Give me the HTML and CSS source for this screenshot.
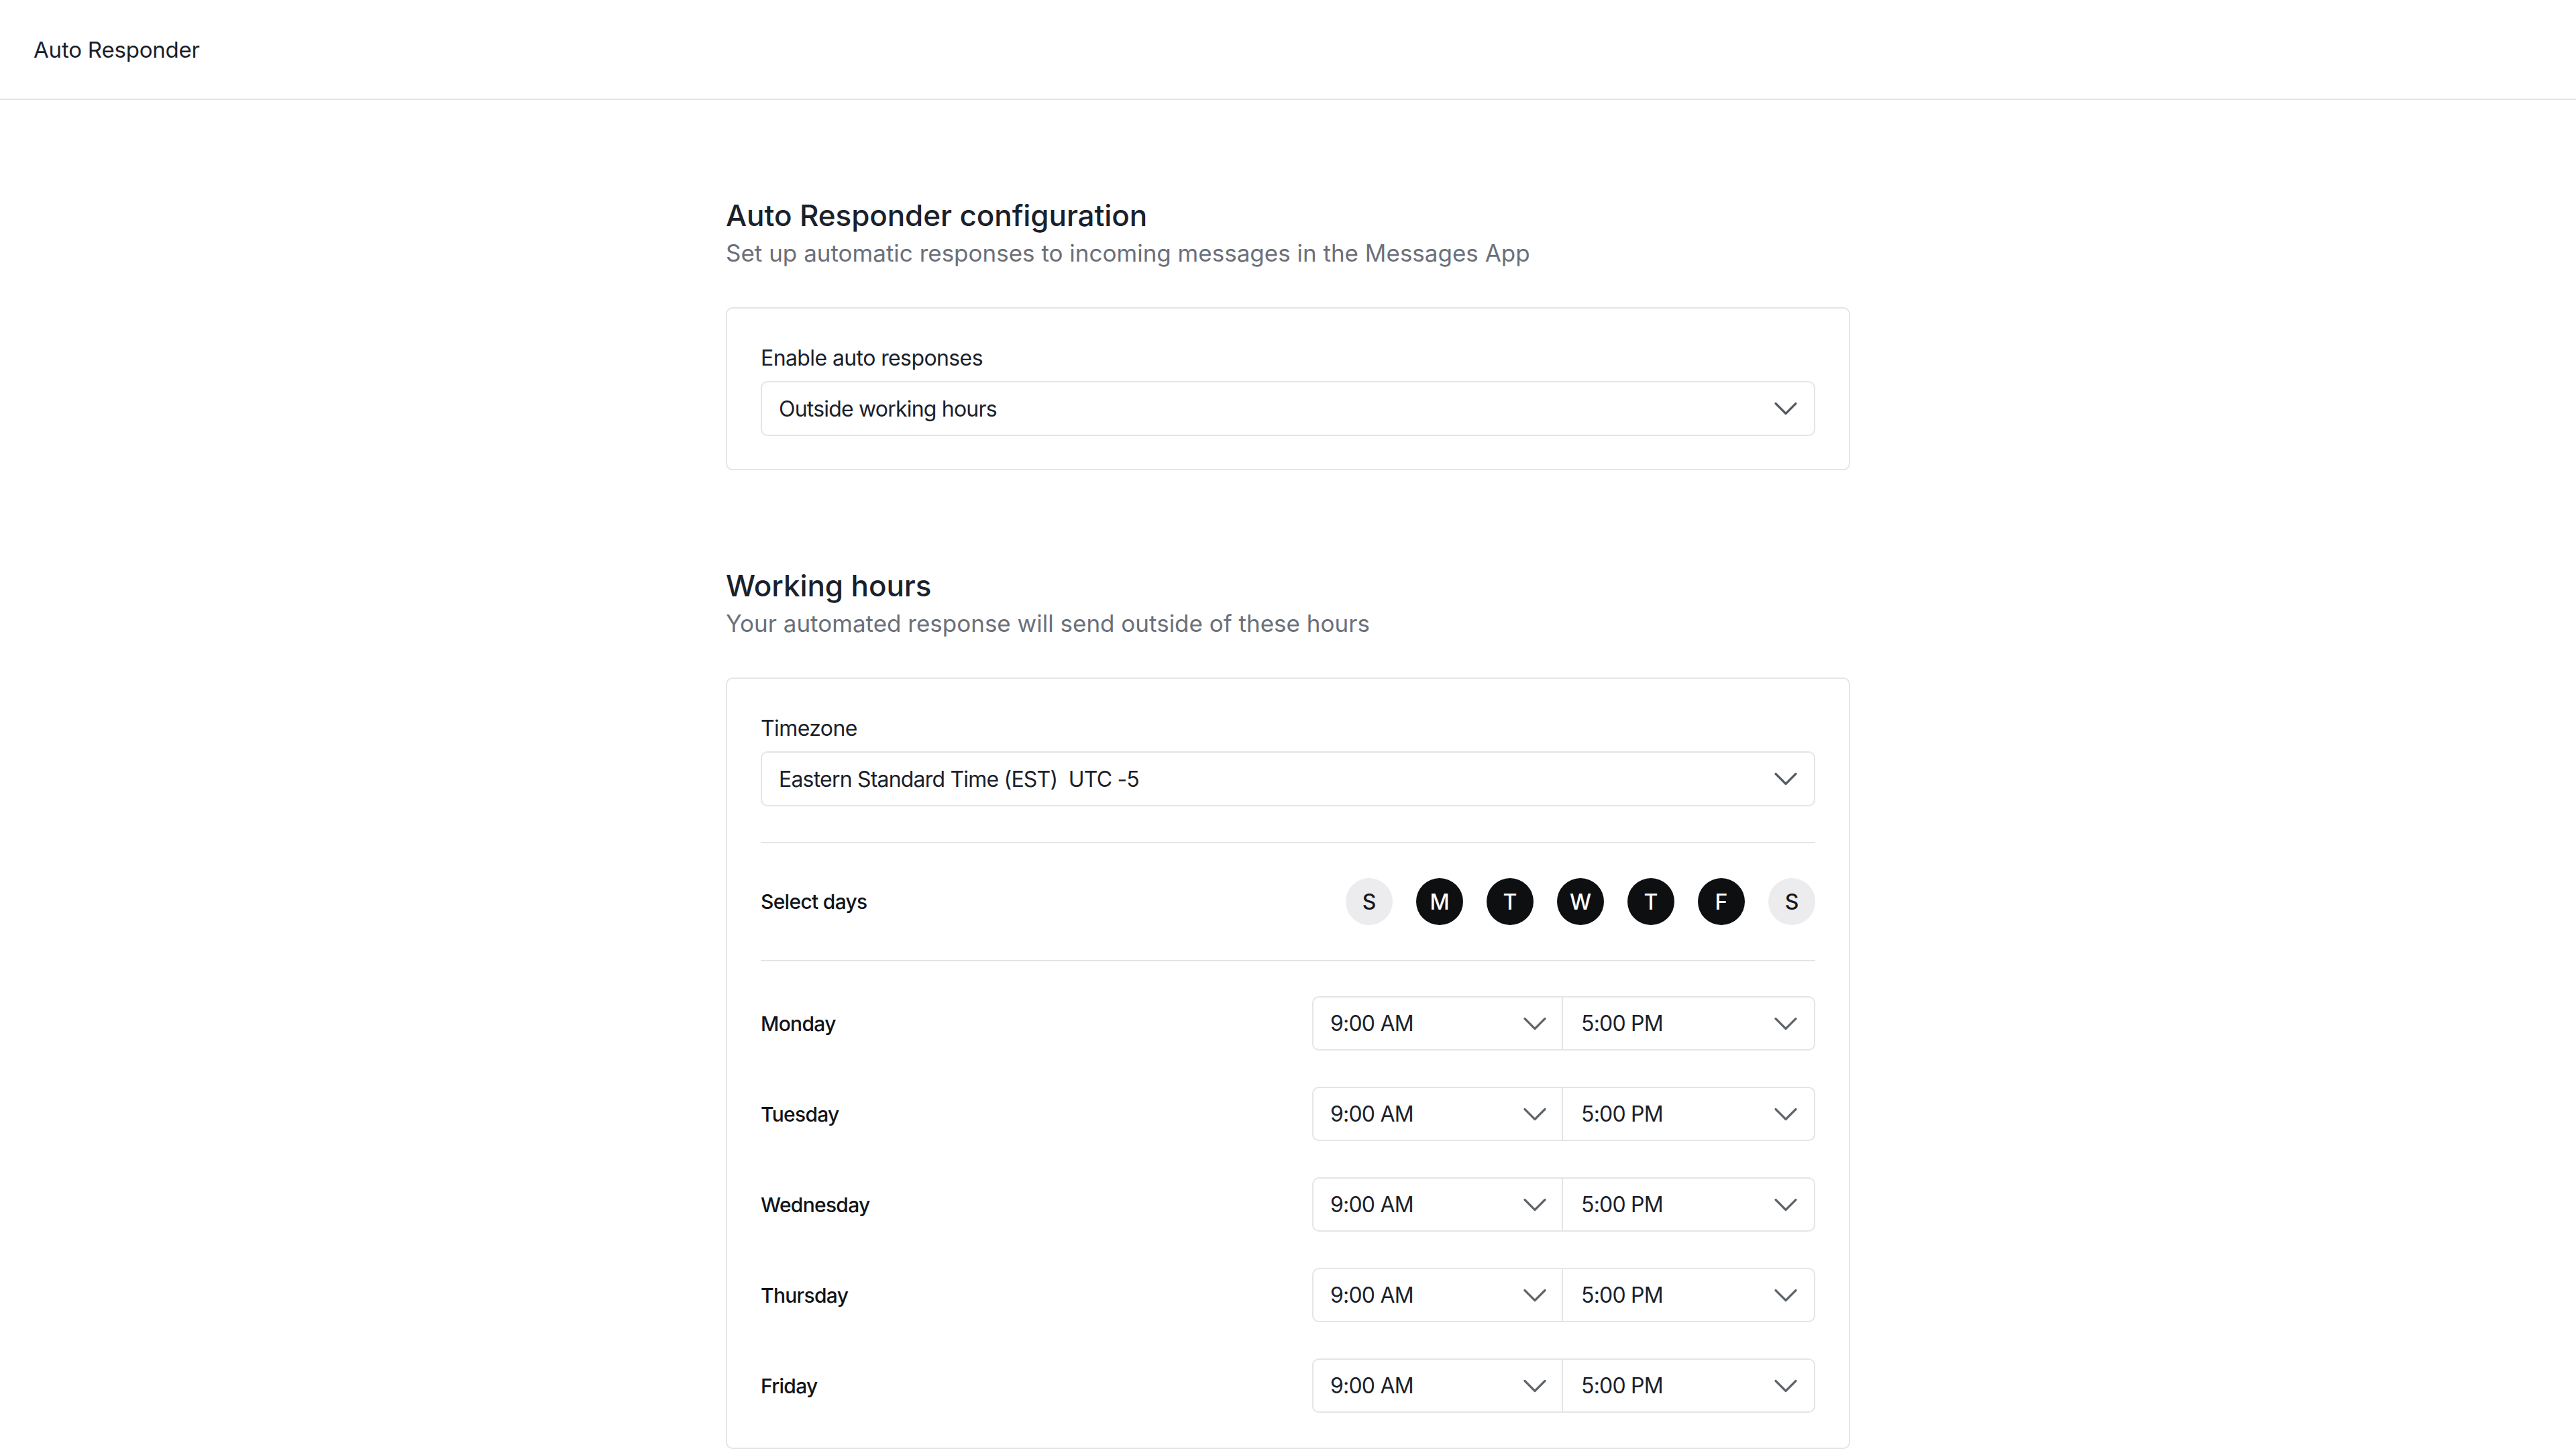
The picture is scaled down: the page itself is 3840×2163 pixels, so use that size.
FILE: index.html
```html
<!DOCTYPE html>
<html lang="en">
<head>
<meta charset="utf-8">
<title>Auto Responder</title>
<link rel="stylesheet" href="styles.css">
</head>
<body>
<header class="topbar">
  <span class="topbar-title">Auto Responder</span>
</header>
<main class="content">
  <section class="section">
    <h2 class="section-title">Auto Responder configuration</h2>
    <p class="section-sub">Set up automatic responses to incoming messages in the Messages App</p>
    <div class="card">
      <label class="field-label">Enable auto responses</label>
      <div class="select">
        <span>Outside working hours</span>
        <svg class="chev" viewBox="0 0 24 24"><path d="m6 9 6 6 6-6"/></svg>
      </div>
    </div>
  </section>

  <section class="section">
    <h2 class="section-title">Working hours</h2>
    <p class="section-sub">Your automated response will send outside of these hours</p>
    <div class="card card-hours">
      <div class="tz-block">
        <label class="field-label">Timezone</label>
        <div class="select">
          <span>Eastern Standard Time (EST)&nbsp; UTC -5</span>
          <svg class="chev" viewBox="0 0 24 24"><path d="m6 9 6 6 6-6"/></svg>
        </div>
      </div>
      <div class="days-row">
        <span class="row-label">Select days</span>
        <div class="day-list">
          <span class="day">S</span>
          <span class="day on">M</span>
          <span class="day on">T</span>
          <span class="day on">W</span>
          <span class="day on">T</span>
          <span class="day on">F</span>
          <span class="day">S</span>
        </div>
      </div>
      <div class="hours">
        <div class="hour-row">
          <span class="row-label">Monday</span>
          <div class="time-group">
            <div class="time"><span>9:00 AM</span><svg class="chev light" viewBox="0 0 24 24"><path d="m6 9 6 6 6-6"/></svg></div>
            <div class="time"><span>5:00 PM</span><svg class="chev light" viewBox="0 0 24 24"><path d="m6 9 6 6 6-6"/></svg></div>
          </div>
        </div>
        <div class="hour-row">
          <span class="row-label">Tuesday</span>
          <div class="time-group">
            <div class="time"><span>9:00 AM</span><svg class="chev light" viewBox="0 0 24 24"><path d="m6 9 6 6 6-6"/></svg></div>
            <div class="time"><span>5:00 PM</span><svg class="chev light" viewBox="0 0 24 24"><path d="m6 9 6 6 6-6"/></svg></div>
          </div>
        </div>
        <div class="hour-row">
          <span class="row-label">Wednesday</span>
          <div class="time-group">
            <div class="time"><span>9:00 AM</span><svg class="chev light" viewBox="0 0 24 24"><path d="m6 9 6 6 6-6"/></svg></div>
            <div class="time"><span>5:00 PM</span><svg class="chev light" viewBox="0 0 24 24"><path d="m6 9 6 6 6-6"/></svg></div>
          </div>
        </div>
        <div class="hour-row">
          <span class="row-label">Thursday</span>
          <div class="time-group">
            <div class="time"><span>9:00 AM</span><svg class="chev light" viewBox="0 0 24 24"><path d="m6 9 6 6 6-6"/></svg></div>
            <div class="time"><span>5:00 PM</span><svg class="chev light" viewBox="0 0 24 24"><path d="m6 9 6 6 6-6"/></svg></div>
          </div>
        </div>
        <div class="hour-row">
          <span class="row-label">Friday</span>
          <div class="time-group">
            <div class="time"><span>9:00 AM</span><svg class="chev light" viewBox="0 0 24 24"><path d="m6 9 6 6 6-6"/></svg></div>
            <div class="time"><span>5:00 PM</span><svg class="chev light" viewBox="0 0 24 24"><path d="m6 9 6 6 6-6"/></svg></div>
          </div>
        </div>
      </div>
    </div>
  </section>
</main>
</body>
</html>
```

FILE: styles.css
```css
* { box-sizing: border-box; }

html, body {
  margin: 0;
  padding: 0;
  background: #ffffff;
}

body {
  font-family: Inter, "Noto Sans", "Liberation Sans", sans-serif;
  color: #1d2530;
  -webkit-font-smoothing: antialiased;
}

.topbar {
  height: 149px;
  border-bottom: 2px solid #e4e5e8;
  display: flex;
  align-items: center;
  padding-left: 50px;
}

.topbar-title {
  font-size: 33px;
  line-height: 50px;
  letter-spacing: -0.2px;
  color: #1a212b;
}

.content {
  width: 1676px;
  margin: 0 auto;
}

.section {
  padding-top: 142px;
}

.section-title {
  margin: 0;
  font-size: 44px;
  line-height: 60px;
  font-weight: 500;
  letter-spacing: -0.1px;
  color: #1a212b;
}

.section-sub {
  margin: 0;
  font-size: 35px;
  line-height: 52px;
  color: #6b7079;
}

.card {
  margin-top: 55px;
  border: 2px solid #e4e5e8;
  border-radius: 10px;
  padding: 49px 50px;
}

.card-hours {
  padding-bottom: 52px;
}

.field-label {
  display: block;
  font-size: 32px;
  line-height: 50px;
  letter-spacing: -0.6px;
  margin-bottom: 9px;
  color: #1a212b;
}

.select {
  height: 82px;
  border: 2px solid #e4e5e8;
  border-radius: 10px;
  padding: 0 12px 0 25px;
  display: flex;
  align-items: center;
  justify-content: space-between;
  font-size: 32px;
  letter-spacing: -0.8px;
  color: #1a212b;
}

.chev {
  width: 60px;
  height: 60px;
  fill: none;
  stroke: #555b64;
  stroke-width: 1.3;
  stroke-linecap: round;
  stroke-linejoin: round;
  flex: none;
}

.chev.light {
  stroke: #60656d;
}

.tz-block {
  padding-bottom: 53px;
  border-bottom: 2px solid #e4e5e8;
}

.days-row {
  display: flex;
  align-items: center;
  justify-content: space-between;
  padding: 52px 0;
  border-bottom: 2px solid #e4e5e8;
}

.row-label {
  font-size: 30px;
  font-weight: 500;
  letter-spacing: -0.7px;
  color: #111418;
}

.day-list {
  display: flex;
  gap: 35px;
}

.day {
  width: 70px;
  height: 70px;
  border-radius: 50%;
  background: #ececee;
  color: #16181c;
  display: flex;
  align-items: center;
  justify-content: center;
  font-size: 32px;
  font-weight: 500;
}

.day.on {
  background: #0e0f11;
  color: #ffffff;
}

.hours {
  padding-top: 52px;
  display: flex;
  flex-direction: column;
  gap: 54px;
}

.hour-row {
  display: flex;
  align-items: center;
  justify-content: space-between;
}

.time-group {
  width: 750px;
  height: 81px;
  border: 2px solid #e4e5e8;
  border-radius: 10px;
  display: flex;
}

.time {
  flex: 1;
  display: flex;
  align-items: center;
  justify-content: space-between;
  padding: 0 10px 0 25px;
  font-size: 32px;
  letter-spacing: -0.8px;
  color: #1a212b;
}

.time + .time {
  border-left: 2px solid #e4e5e8;
  padding-left: 27px;
  padding-right: 12px;
}
```
